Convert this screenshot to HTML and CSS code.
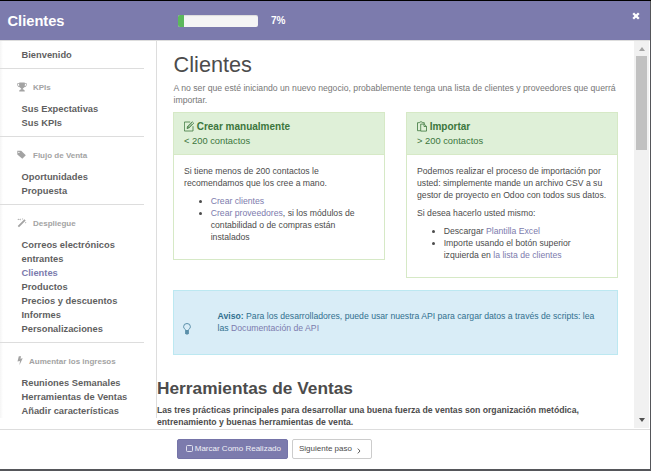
FILE: index.html
```html
<!DOCTYPE html>
<html lang="es">
<head>
<meta charset="utf-8">
<title>Clientes</title>
<link rel="stylesheet" href="styles.css">
</head>
<body>
<div class="modal">
  <header class="header">
    <h1 class="header-title">Clientes</h1>
    <div class="progress"><div class="progress-bar"></div></div>
    <span class="percent">7%</span>
    <svg class="close" viewBox="0 0 8 8"><path d="M1.2 1.2 6.8 6.8M6.8 1.2 1.2 6.8"/></svg>
  </header>
  <div class="body">
    <nav class="sidebar">
      <ul class="group first"><li>Bienvenido</li></ul>
      <section class="section">
        <h2><svg viewBox="0 0 10 10"><path d="M2.300.5h5.400v.8h2v1.400c0 1.400-1.200 2.300-2.500 2.500-.4.6-.8 1-1.400 1.200v1.200c1.200 0 2 .5 2 1.800H2.200c0-1.300.8-1.800 2-1.800V6.400c-.6-.2-1-.6-1.400-1.200C1.500 5 .3 4.100.3 2.700V1.300h2zM1 2v.7c0 .7.6 1.300 1.300 1.600-.2-.6-.2-1.500-.2-2.300zm6.900 0c0 .8 0 1.700-.2 2.300C8.400 4 9 3.400 9 2.700V2z"/></svg>KPIs</h2>
        <ul class="group"><li>Sus Expectativas</li><li>Sus KPIs</li></ul>
      </section>
      <section class="section">
        <h2><svg viewBox="0 0 10 10"><path fill-rule="evenodd" d="M.3.800h3.900L8.800 5.300 5.300 8.700.3 4.500zM1.900 1.700a.7.7 0 1 0 0 1.400.7.7 0 0 0 0-1.400"/></svg>Flujo de Venta</h2>
        <ul class="group"><li>Oportunidades</li><li>Propuesta</li></ul>
      </section>
      <section class="section">
        <h2><svg viewBox="0 0 10 10"><path d="M.7 7.900 7.400 1.200l1.300 1.300L2 9.200zM3.200.3l.3.900.9.300-.9.300-.3.900-.3-.9-.9-.3.900-.3zM1.300.5l.3.600.6.300-.6.300-.3.600-.3-.6-.6-.3.600-.3zM5.600.200l.3.500.5.3-.5.300-.3.500-.3-.5-.5-.3.500-.3zM8.700 3.800l.3.600.6.300-.6.300-.3.600-.3-.6-.6-.3.600-.3z"/></svg>Despliegue</h2>
        <ul class="group"><li>Correos electrónicos<br>entrantes</li><li class="active">Clientes</li><li>Productos</li><li>Precios y descuentos</li><li>Informes</li><li>Personalizaciones</li></ul>
      </section>
      <section class="section">
        <h2 class="narrow"><svg viewBox="0 0 6 10"><path d="M1.800.300h2.300L3.400 2.700l2.300-.5L2.400 9.300 3 5 .5 5.500z"/></svg>Aumentar los ingresos</h2>
        <ul class="group"><li>Reuniones Semanales</li><li>Herramientas de Ventas</li><li>Añadir características</li></ul>
      </section>
    </nav>
    <main class="main">
      <div class="page">
        <h1 class="title">Clientes</h1>
        <p class="lead">A no ser que esté iniciando un nuevo negocio, probablemente tenga una lista de clientes y proveedores que querrá<br>importar.</p>
        <div class="cards">
          <article class="card">
            <div class="card-head">
              <h3><svg viewBox="0 0 10 10"><path d="M6.200.5H.4v9H9V4.700M3 7l.7-2.300L8.200.3l1.500 1.400L5.200 6.300zM3.700 4.700l1.500 1.600M3.200 6.800 8 2"/></svg>Crear manualmente</h3>
              <p>&lt; 200 contactos</p>
            </div>
            <div class="card-body">
              <p>Si tiene menos de 200 contactos le<br>recomendamos que los cree a mano.</p>
              <ul><li><a>Crear clientes</a></li><li><a>Crear proveedores</a>, si los módulos de<br>contabilidad o de compras están<br>instalados</li></ul>
            </div>
          </article>
          <article class="card">
            <div class="card-head">
              <h3><svg viewBox="0 0 10 10"><path d="M3.500 9.200H.5V1.200h1.800M2.300 1.200c0-1.200 3.400-1.200 3.400 0h1.600v1.200M3.700 2.600h3.500l2.300 2.200v4.800H3.700zM7 2.700V5h2.400"/></svg>Importar</h3>
              <p>&gt; 200 contactos</p>
            </div>
            <div class="card-body">
              <p>Podemos realizar el proceso de importación por<br>usted: simplemente mande un archivo CSV a su<br>gestor de proyecto en Odoo con todos sus datos.</p>
              <p>Si desea hacerlo usted mismo:</p>
              <ul><li>Descargar <a>Plantilla Excel</a></li><li>Importe usando el botón superior<br>izquierda en <a>la lista de clientes</a></li></ul>
            </div>
          </article>
        </div>
        <div class="notice">
          <svg viewBox="0 0 8 12"><path class="bulb" d="M2.600 7.500C2.600 6 .6 5.700.6 3.700a3.400 3.200 0 0 1 6.800 0c0 2-2 2.300-2 3.800z"/><path class="base" d="M2.100 7.300h3.800v2.900L4.900 11.500H3.100l-1-1.300z"/></svg>
          <p><b>Aviso:</b> Para los desarrolladores, puede usar nuestra API para cargar datos a través de scripts: lea<br>las <a>Documentación de API</a></p>
        </div>
      </div>
      <h2 class="next-title">Herramientas de Ventas</h2>
      <p class="next-text">Las tres prácticas principales para desarrollar una buena fuerza de ventas son organización metódica,<br>entrenamiento y buenas herramientas de venta.</p>
    </main>
    <div class="scrollbar"><i class="up"></i><div class="thumb"></div><i class="down"></i></div>
  </div>
  <footer class="footer">
    <button class="btn primary"><i class="box"></i><span>Marcar Como Realizado</span></button>
    <button class="btn"><span>Siguiente paso</span><svg viewBox="0 0 4 6"><path d="M.8.6 3 3 .8 5.400"/></svg></button>
  </footer>
</div>
</body>
</html>
```
FILE: styles.css
```css
* { box-sizing: border-box; margin: 0; padding: 0; }
body {
  width: 651px; height: 471px; overflow: hidden;
  padding: 1px 1px 2px 0;
  background: linear-gradient(#000 0 1px, #55565a 1px);
  font: 8.67px/12px "Liberation Sans", Arial, sans-serif;
  color: #4c4c4c; white-space: nowrap;
}
ul { list-style: none; }
svg { fill: none; stroke: currentColor; flex: none; }
a { color: #7c7bad; }
.modal { width: 650px; height: 468px; display: flex; flex-direction: column; background: #fff; }

.header {
  height: 40px; flex: none; display: flex; align-items: flex-start;
  background: #7c7bad; color: #fff; border-bottom: 1px solid #ddd;
}
.header-title { width: 178px; padding: 11px 0 0 7.500px; font-size: 14.67px; line-height: 18px; }
.progress {
  width: 80px; height: 12px; margin-top: 14px; border-radius: 2px; overflow: hidden;
  background: #f5f5f5; box-shadow: inset 0 1px 1px rgba(0,0,0,.1);
}
.progress-bar { width: 6px; height: 12px; background: #5cb85c; }
.percent { margin: 13px auto 0 13px; font-size: 10px; line-height: 13px; font-weight: bold; }
.close { width: 8px; height: 8px; margin: 11px 10px 0 0; stroke-width: 2.300; }

.body { height: 388px; flex: none; display: flex; overflow: hidden; }
.sidebar {
  width: 157px; height: 377px; flex: none; padding-top: 7px;
  border-right: 1px solid #ddd; color: #5f5f5f;
  background: linear-gradient(90deg, #f5f5f5, #fff 3px);
  font-size: 9.33px; line-height: 14px; font-weight: bold;
}
.group { width: 144px; padding: 0 0 6px 21.500px; }
.section { width: 144px; border-top: 1px solid #ddd; }
.section h2 {
  display: flex; align-items: flex-start; height: 14px; margin: 12px 0 7px; padding-left: 17px;
  font-size: 8px; color: #a3a3a3;
}
.section h2 svg { width: 10px; height: 10px; margin: 1px 6px 0 0; fill: currentColor; stroke: none; }
.section h2.narrow svg { width: 6px; }
.active { color: #7c7bad; }

.main { flex: 1; min-width: 0; }
.page { padding: 12px 16px 0; }
.title { padding-left: .6px; font-size: 21.700px; line-height: 24px; font-weight: normal; }
.lead { margin-top: 5px; padding-left: .5px; color: #777; font-size: 8.680px; }
.cards { display: grid; grid-template-columns: 212px 212px; justify-content: space-between; align-items: start; margin-top: 6px; }
.card { border: 1px solid #d6e9c6; }
.card-head { height: 42px; padding: 6px 10px 0; background: #dff0d8; border-bottom: 1px solid #d6e9c6; color: #3c763d; }
.card-head h3 { display: flex; align-items: center; height: 15px; font-size: 10px; }
.card-head svg { width: 10px; height: 11px; margin: -1px 2.700px 0 0; stroke-width: .8; }
.card-head p { margin-top: 1px; font-size: 9.33px; }
.card-body { padding: 10px 10px 16px; }
.card-body p { margin-bottom: 6px; }
.card-body ul { list-style: disc; padding-left: 26.700px; }
.notice {
  display: flex; height: 65px; margin-top: 12px; padding: 19px 8.500px 0;
  background: #d9edf7; border: 1px solid #bce8f1; color: #31708f;
}
.notice svg { width: 8px; height: 12px; margin: 13px 27px 0 0; opacity: .75; }
.notice .base { fill: currentColor; stroke: none; }
.next-title { margin-top: 23px; font-size: 17.300px; line-height: 20px; }
.next-text { margin-top: 6px; font-weight: bold; }

.scrollbar { width: 16px; height: 387px; flex: none; background: #f1f1f1; border-right: 1px solid #fff; display: flex; flex-direction: column; align-items: center; }
.up { border: 3.500px solid transparent; border-top: 0; border-bottom: 4px solid #a3a3a3; margin: 6px 0 5px; }
.thumb { width: 11px; height: 94px; background: #c1c1c1; }
.down { border: 3.500px solid transparent; border-bottom: 0; border-top: 4px solid #505050; margin: auto 0 6px; }

.footer { flex: 1; display: flex; gap: 4px; padding: 9px 0 0 177px; border-top: 1px solid #ddd; }
.btn {
  height: 20px; display: flex; align-items: center; padding: 0 6px; border: 1px solid #ccc; border-radius: 2px;
  background: #fff; color: #4c4c4c; font: 8px/12px "Liberation Sans", Arial, sans-serif;
}
.btn.primary { width: 111px; padding: 0 6px 0 8px; background: #7c7bad; border-color: #7574a8; color: #f0f0f7; }
.btn:last-child { width: 80px; }
.box { width: 7px; height: 7px; margin: -2px 2px 0 0; border: 1px solid #e0e0ee; border-radius: 1.500px; }
.btn svg { width: 4px; height: 6px; margin: 4px 0 0 5px; stroke-width: .9; }
```
